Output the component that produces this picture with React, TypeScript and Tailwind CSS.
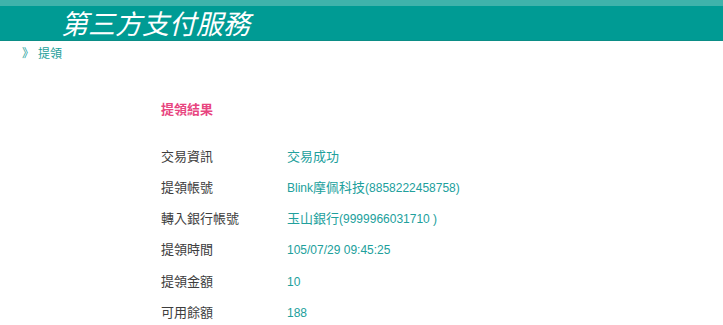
import React from "react";

const rows: { label: string; value: React.ReactNode }[] = [
  { label: "交易資訊", value: "交易成功" },
  {
    label: "提領帳號",
    value: (
      <>
        <span className="text-[12px]">Blink</span>摩佩科技<span className="text-[12px]">(8858222458758)</span>
      </>
    ),
  },
  {
    label: "轉入銀行帳號",
    value: (
      <>
        玉山銀行<span className="text-[12px]">(9999966031710 )</span>
      </>
    ),
  },
  { label: "提領時間", value: <span className="text-[12px]">105/07/29 09:45:25</span> },
  { label: "提領金額", value: <span className="text-[12px]">10</span> },
  { label: "可用餘額", value: <span className="text-[12px]">188</span> },
];

export default function App() {
  return (
    <div
      className="w-[723px] h-[325px] bg-white overflow-hidden"
      style={{ fontFamily: '"Liberation Sans", "Noto Sans CJK TC", sans-serif' }}
    >
      <div className="h-[6px] bg-[#3fb3ab]" />
      <div className="h-[35px] bg-[#009b94] border-b border-[#0b8d86] flex items-start pl-[61px] pt-[2px]">
        <span className="text-white text-[27px] italic leading-[35px]">第三方支付服務</span>
      </div>
      <div className="h-[24px] flex items-center pl-[22px] pt-[2px] text-[12px] text-[#1b9e9a]">
        <span className="mr-[4px]">》</span>
        <span>提領</span>
      </div>
      <div className="pl-[161px] pt-[35px]">
        <div className="h-[20px] flex items-center text-[13px] font-bold text-[#e8457f]">提領結果</div>
        <div className="pt-[21px]">
          {rows.map((r) => (
            <div key={r.label} className="h-[31.2px] flex items-center text-[13px]">
              <div className="w-[126px] text-[#3d3d3d]">{r.label}</div>
              <div className="text-[#21a09c]">{r.value}</div>
            </div>
          ))}
        </div>
      </div>
    </div>
  );
}
